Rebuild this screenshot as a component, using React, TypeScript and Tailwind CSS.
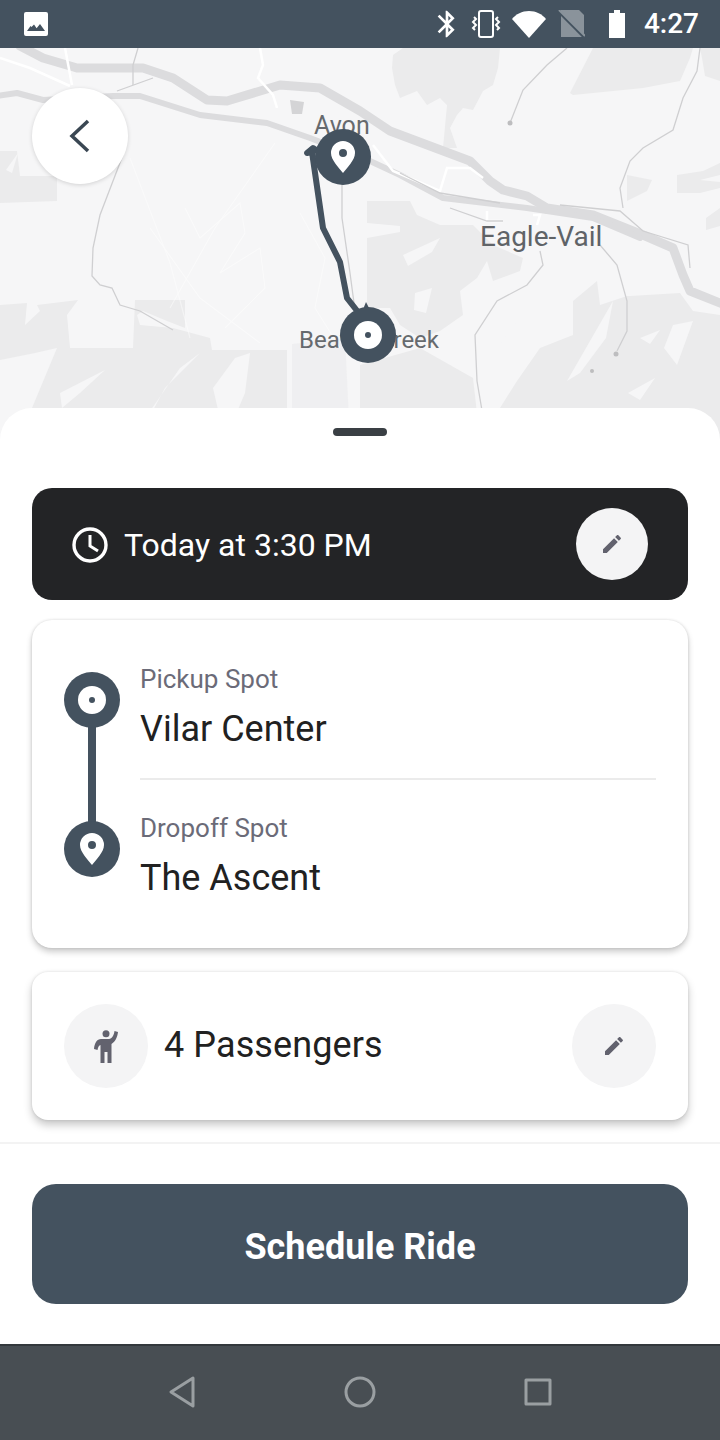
const slate = "#44525f";

function Pencil() {
  return (
    <svg viewBox="0 0 24 24" className="h-6 w-6 fill-[#62626e]">
      <path d="M3 17.25V21h3.75L17.81 9.94l-3.75-3.75L3 17.25zM20.71 7.04c.39-.39.39-1.02 0-1.41l-2.34-2.34c-.39-.39-1.02-.39-1.41 0l-1.83 1.83 3.75 3.75 1.83-1.83z" />
    </svg>
  );
}

function PinGlyph() {
  return (
    <svg viewBox="0 0 24 32" className="h-8 w-6">
      <path
        fillRule="evenodd"
        fill="#fff"
        d="M12 32C8 27 0 19 0 12a12 12 0 0 1 24 0c0 7-8 15-12 20zM12 8a4 4 0 1 0 0 8 4 4 0 0 0 0-8z"
      />
    </svg>
  );
}

function RingDot() {
  return (
    <div className="flex h-7 w-7 items-center justify-center rounded-full bg-white">
      <div className="h-[6px] w-[6px] rounded-full bg-[#44525f]" />
    </div>
  );
}

function StatusBar() {
  return (
    <div className="flex h-12 shrink-0 items-center bg-[#44525f] pl-6 pr-[21px]">
      <svg viewBox="0 0 24 24" className="h-6 w-6">
        <path
          fill="#fff"
          fillRule="evenodd"
          d="M2 0h20a2 2 0 0 1 2 2v20a2 2 0 0 1-2 2H2a2 2 0 0 1-2-2V2a2 2 0 0 1 2-2zM3 19h18l-5-7-3.4 4.2L10 12.5 7.5 15 6.5 14z"
        />
      </svg>
      <div className="flex-1" />
      <svg viewBox="0 0 24 24" className="h-8 w-8 fill-white">
        <path d="M17.71 7.71L12 2h-1v7.59L6.41 5 5 6.41 10.59 12 5 17.59 6.41 19 11 14.41V22h1l5.71-5.71-4.3-4.29 4.3-4.29zM13 5.83l1.88 1.88L13 9.59V5.83zm1.88 10.46L13 18.17v-3.76l1.88 1.88z" />
      </svg>
      <svg viewBox="0 0 32 28" className="ml-[7px] h-7 w-8" fill="none" stroke="#fff" strokeWidth="2">
        <rect x="9" y="1" width="14" height="26" rx="2" />
        <path d="M4 7l2 2-3 3 3 3-3 3 2 2" />
        <path d="M28 7l-2 2 3 3-3 3 3 3-2 2" />
      </svg>
      <svg viewBox="0 0 34 27" className="ml-[10px] h-[27px] w-[34px] fill-white">
        <path d="M17 27 0 8C4 3 10 0 17 0s13 3 17 8z" />
      </svg>
      <svg viewBox="0 0 28 28" className="ml-[11px] h-7 w-7">
        <path fill="#8a939b" d="M4 0h18l5 5v22H4z" />
        <path stroke="#44525f" strokeWidth="3" d="M0 0 28 28" />
        <path stroke="#8a939b" strokeWidth="2" d="M2 0 28 26" />
      </svg>
      <svg viewBox="0 0 16 28" className="ml-[24px] h-7 w-4 fill-white">
        <path d="M5 0h6v3h5v25H0V3h5z" />
      </svg>
      <span className="ml-[19px] text-[28px] leading-none font-medium text-white">4:27</span>
    </div>
  );
}

function MapArea() {
  return (
    <div className="relative h-[392px] shrink-0 overflow-hidden bg-[#f6f6f7]">
      <svg viewBox="0 0 720 392" className="absolute inset-0 h-full w-full">
        <g fill="#ebebec">
          <path d="M0 103 17 103 20 128 57 128 57 153 0 155z" />
          <path d="M0 257 27 255 25 277 40 263 37 257 78 252 67 267 70 300 133 300 135 252 185 252 185 280 167 273 143 263 137 267 140 277 173 280 210 290 212 302 287 302 287 392 0 392z" />
          <path d="M393 7 403 0 500 0 498 20 493 37 483 43 473 62 463 60 457 67 450 80 457 100 443 100 447 57 440 50 427 57 417 43 400 50 395 37 392 20z" />
          <path d="M570 45 593 0 693 0 690 10 680 33 643 40 573 47z" />
          <path d="M700 0 720 0 720 33 705 28 702 10z" />
          <path d="M677 127 703 123 720 115 720 140 700 145 677 145z" />
          <path d="M706 170 720 160 720 178 706 182z" />
          <path d="M627 127 652 132 647 143 627 153z" />
          <path d="M367 153 410 153 417 167 440 177 473 177 493 197 523 210 520 223 493 233 487 213 477 230 460 243 463 267 440 283 420 290 400 277 390 260 367 260z" />
          <path d="M630 248 680 245 693 263 720 267 720 392 480 392 500 360 517 333 540 300 573 287 573 253 597 233 600 257 627 248z" />
          <path d="M360 317 420 300 473 330 480 392 360 392z" />
          <path d="M292 296 345 290 350 392 292 392z" opacity="0.6" />
        </g>
        <g fill="#f6f6f7">
          <path d="M0 312 35 305 57 300 32 360 12 392 0 392z" />
          <path d="M130 392 137 392 165 340 200 305 180 320z" />
          <path d="M213 340 235 310 250 305 245 345 225 392z" />
          <path d="M60 345 105 322 80 345 62 360z" />
          <path d="M18 105 12 125 6 122z" />
          <path d="M403 207 440 190 432 204 408 218z" />
          <path d="M367 175 400 178 400 184 367 190z" />
          <path d="M415 245 432 240 426 265 414 262z" />
          <path d="M567 333 613 253 606 290 580 325z" />
          <path d="M677 317 693 273 673 277 664 300z" />
          <path d="M640 290 660 282 650 296z" />
          <path d="M497 300 520 270 530 295 508 325z" />
          <path d="M545 272 555 258 565 275 552 285z" />
          <path d="M628 345 655 330 640 352z" />
          <path d="M412 70 435 62 428 78z" />
          <path d="M700 132 720 127 720 134z" />
        </g>
        <g fill="none" stroke="#ffffff" strokeWidth="1.2" opacity="0.45">
          <path d="M130 110 170 215 190 290" />
          <path d="M275 95 215 180 170 260" />
          <path d="M185 160 200 190 240 155 245 185 220 225 260 200 265 240 225 280" />
          <path d="M300 165 325 210 315 260 340 300" />
          <path d="M150 180 200 250 260 295" />
        </g>
        <g fill="none" stroke="#dcdcde" strokeLinejoin="round" strokeLinecap="round">
          <path strokeWidth="9" d="M20 -2 43 10 77 20H143L173 30 207 52 227 53 280 37 320 40 360 63 390 83 470 113 490 133 503 142 527 148 547 160 593 167 643 187 673 200 683 227 690 243 730 259" />
          <path strokeWidth="6" d="M-4 48 17 45 43 52 113 48H140L200 67 267 75 310 90 370 113 400 127 443 150 527 160 547 163" />
          <path strokeWidth="6" d="M547 163 593 170 640 190" />
        </g>
        <g fill="none" stroke="#ffffff" strokeWidth="2.5">
          <path d="M0 10 30 20 70 38" />
          <path d="M65 0 72 37" />
          <path d="M260 0 263 17 258 30 273 47 277 60" />
          <path d="M373 97 393 123 440 143 447 120 470 120 483 130" />
          <path d="M487 163 487 173 503 173" />
          <path d="M533 167 540 167 537 177" />
        </g>
        <g fill="none" stroke="#cfcfd1" strokeWidth="1.3">
          <path d="M138 0 133 17 133 37" />
          <path d="M123 107 113 133 100 167 93 200 92 228 100 237 112 240 120 257 140 263 173 282" />
          <path d="M342 136 342 170 350 225 356 270" />
          <path d="M567 0 547 17 523 42 510 75" />
          <path d="M700 0 697 23 683 50 673 82 643 100 630 113 620 140 623 160" />
          <path d="M600 197 617 217 627 253 627 283 617 303" />
          <path d="M540 203 543 217 527 237 497 253 475 287 477 333 487 392" />
          <path d="M560 157 620 163 643 183 688 197 690 220" />
          <path d="M450 160 487 173 503 173" />
          <path d="M153 30 117 43" />
          <path d="M400 125 440 145 500 155" />
        </g>
        <circle cx="510" cy="75" r="2.5" fill="#bdbdbf" />
        <circle cx="616" cy="306" r="2.5" fill="#bdbdbf" />
        <circle cx="592" cy="323" r="2" fill="#bdbdbf" />
        <path d="M290 52 304 54 302 66 292 66z" fill="#d4d4d6" />
      </svg>

      <span className="absolute left-[314px] top-[63px] text-[25px] leading-[30px] text-[#666a6e]">Avon</span>
      <span className="absolute left-[480px] top-[171px] text-[28px] leading-[36px] text-[#5f6367]">Eagle-Vail</span>
      <span className="absolute left-[299px] top-[277px] text-[24px] leading-[30px] text-[#666a6e]">Beaver Creek</span>

      <svg viewBox="0 0 720 392" className="absolute inset-0 h-full w-full">
        <path
          d="M358 264 347 250 340 214 323 180 312 104 307 105 313 100 322 106"
          fill="none"
          stroke={slate}
          strokeWidth="6"
          strokeLinejoin="round"
          strokeLinecap="round"
        />
        <path d="M362 264 366 254 371 264z" fill={slate} />
      </svg>

      <div className="absolute left-[315px] top-[81px] flex h-14 w-14 items-center justify-center rounded-full bg-[#44525f]">
        <PinGlyph />
      </div>
      <div className="absolute left-[340px] top-[259px] flex h-14 w-14 items-center justify-center rounded-full bg-[#44525f]">
        <RingDot />
      </div>

      <button
        type="button"
        className="absolute left-8 top-10 flex h-24 w-24 items-center justify-center rounded-full bg-white shadow-[0_1px_4px_rgba(0,0,0,0.15)]"
      >
        <svg viewBox="0 0 24 36" className="h-9 w-6" fill="none" stroke="#3a4753" strokeWidth="3.5">
          <path d="M20 3 4 18 20 33" />
        </svg>
      </button>
    </div>
  );
}

function TimeCard() {
  return (
    <div className="flex h-28 items-center justify-between rounded-[20px] bg-[#232426] pl-10 pr-10">
      <div className="flex items-center gap-4 pt-[2px]">
        <svg viewBox="0 0 36 36" className="-mt-[1px] h-9 w-9" fill="none" stroke="#fff" strokeWidth="3.4">
          <circle cx="18" cy="18" r="16" />
          <path d="M18 8v11l8 5" strokeWidth="3" />
        </svg>
        <span className="text-[32px] leading-none text-white">Today at 3:30 PM</span>
      </div>
      <div className="flex h-[72px] w-[72px] items-center justify-center rounded-full bg-[#f4f4f5]">
        <Pencil />
      </div>
    </div>
  );
}

function RouteCard() {
  return (
    <div className="mt-5 flex h-[328px] rounded-[20px] bg-white px-8 pt-[52px] shadow-[0_4px_6px_rgba(0,0,0,0.2),0_0_3px_rgba(0,0,0,0.14)]">
      <div className="relative flex h-[205px] w-14 shrink-0 flex-col items-center justify-between">
        <div className="absolute left-6 top-4 h-[170px] w-2 bg-[#44525f]" />
        <div className="relative flex h-14 w-14 items-center justify-center rounded-full bg-[#44525f]">
          <RingDot />
        </div>
        <div className="relative flex h-14 w-14 items-center justify-center rounded-full bg-[#44525f]">
          <PinGlyph />
        </div>
      </div>
      <div className="ml-5 -mt-2 flex-1">
        <div className="h-[116px] border-b-2 border-[#ebebeb]">
          <div className="text-[26px] leading-[30px] text-[#6b6b78]">Pickup Spot</div>
          <div className="mt-[13px] text-[36px] leading-[44px] text-[#212121]">Vilar Center</div>
        </div>
        <div className="mt-[33px] text-[26px] leading-[30px] text-[#6b6b78]">Dropoff Spot</div>
        <div className="mt-[13px] text-[36px] leading-[44px] text-[#212121]">The Ascent</div>
      </div>
    </div>
  );
}

function PassengerCard() {
  return (
    <div className="mt-6 flex h-[148px] items-center rounded-2xl bg-white px-8 shadow-[0_5px_8px_rgba(0,0,0,0.22),0_0_3px_rgba(0,0,0,0.12)]">
      <div className="flex h-[84px] w-[84px] items-center justify-center rounded-full bg-[#f4f4f5]">
        <svg viewBox="0 0 24 33" className="h-[33px] w-6 fill-[#62626e]">
          <circle cx="12" cy="3.7" r="3.5" />
          <path d="M7 9H15C18 9 20 5 20.5 1L24 2C23.5 7 21 12 17.5 14V33H13.5V22H10.5V33H6.5V15C5 15.5 4 17 3.5 20L0 19C.5 13 3 9 7 9Z" />
        </svg>
      </div>
      <span className="ml-4 flex-1 -translate-y-[1px] text-[36px] leading-none tracking-[0.1px] text-[#212121]">
        4 Passengers
      </span>
      <div className="flex h-[84px] w-[84px] items-center justify-center rounded-full bg-[#f4f4f5]">
        <Pencil />
      </div>
    </div>
  );
}

function NavBar() {
  return (
    <div className="flex h-24 shrink-0 items-center border-t-2 border-[#33383c] bg-[#484e53] pb-[2px] pl-[168px]">
      <svg viewBox="0 0 28 32" className="h-8 w-7" fill="none" stroke="#9a9fa2" strokeWidth="3" strokeLinejoin="round">
        <path d="M25 2V30L3 16z" />
      </svg>
      <svg viewBox="0 0 32 32" className="ml-[148px] h-8 w-8" fill="none" stroke="#9a9fa2" strokeWidth="3">
        <circle cx="16" cy="16" r="14" />
      </svg>
      <svg viewBox="0 0 28 28" className="ml-[148px] h-7 w-7" fill="none" stroke="#9a9fa2" strokeWidth="3" strokeLinejoin="round">
        <rect x="2" y="2" width="24" height="24" />
      </svg>
    </div>
  );
}

export default function App() {
  return (
    <div className="flex h-[1440px] w-[720px] flex-col overflow-hidden bg-white font-[Roboto,sans-serif]">
      <StatusBar />
      <MapArea />
      <div className="relative -mt-8 flex flex-1 flex-col rounded-t-[32px] bg-white pt-5">
        <div className="mx-auto h-2 w-[54px] rounded-full bg-[#3a3f44]" />
        <div className="mt-[52px] px-8">
          <TimeCard />
          <RouteCard />
          <PassengerCard />
        </div>
        <div className="mt-[22px] h-[2px] bg-[#f3f3f3]" />
        <div className="px-8 pt-10">
          <button
            type="button"
            className="h-[120px] w-full rounded-3xl bg-[#44525f] pt-[5px] text-[36px] font-bold text-white"
          >
            Schedule Ride
          </button>
        </div>
      </div>
      <NavBar />
    </div>
  );
}
